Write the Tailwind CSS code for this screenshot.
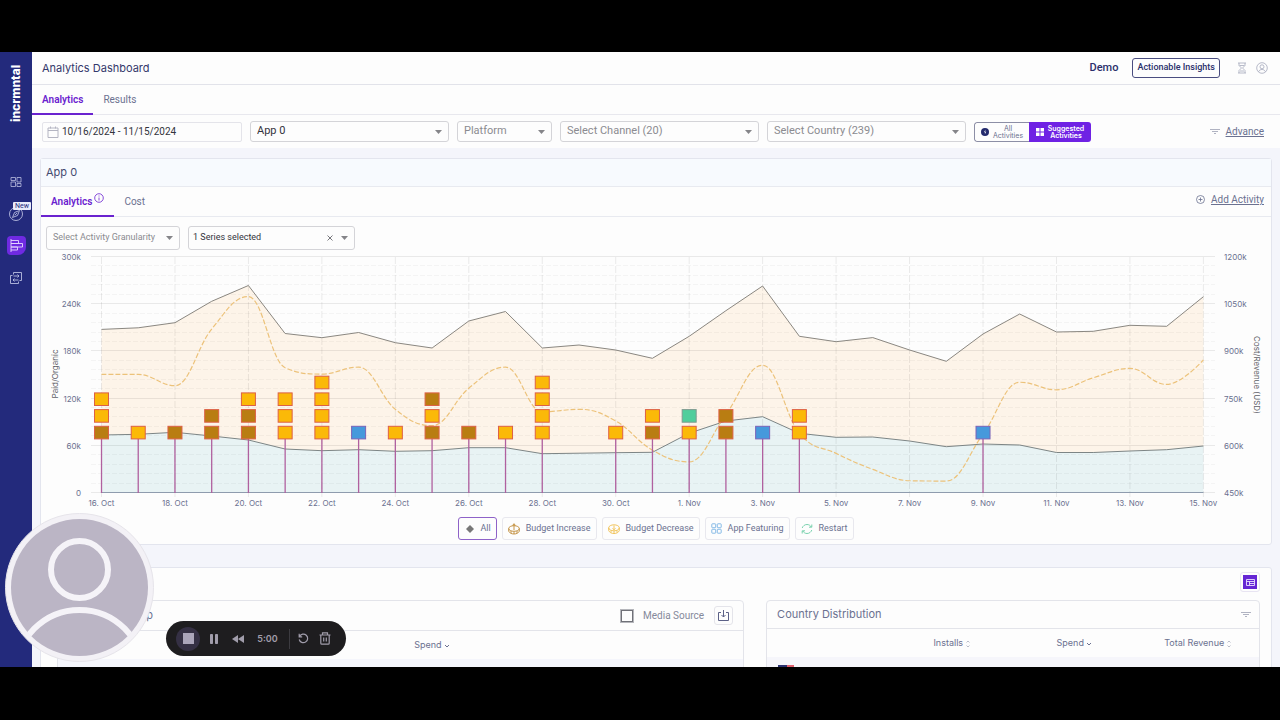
<!DOCTYPE html>
<html lang="en">
<head>
  <meta charset="UTF-8" />
  <meta name="viewport" content="width=device-width, initial-scale=1.0" />
  <title>Analytics Dashboard</title>
  <script src="https://cdn.jsdelivr.net/npm/@tailwindcss/browser@4"></script>
</head>
<body class="bg-black font-['Roboto',sans-serif] text-[11px] text-[#6b7190]">

  <div class="h-screen pt-[52px] pb-[53px]">
    <div class="relative flex h-full overflow-hidden bg-[#f4f5fb]">

      <!-- Sidebar -->
      <nav class="flex w-8 shrink-0 flex-col items-center bg-[#232a7c] pt-2.5 text-[#b9bde0]">
        <a href="#" class="h-[60px] rotate-180 font-['Inter',sans-serif] text-xs leading-8 font-extrabold text-white [writing-mode:vertical-rl]">incrmntal</a>
        <a href="#" aria-label="Dashboard" class="mt-[54px]">
          <svg class="size-3" viewBox="0 0 12 12" fill="none" stroke="currentColor" stroke-width=".8"><path d="M1 1.500h4.500v3H1zM7 1.500h4v4.500H7zM1 6h4.500v4.500H1zM7 7.500h4v3H7z"/></svg>
        </a>
        <a href="#" aria-label="Discover" class="relative mt-[18px]">
          <svg class="size-4" viewBox="0 0 16 16" fill="none" stroke="currentColor" stroke-width=".9"><circle cx="8" cy="8" r="6.500"/><path d="M11.500 4.500 9.500 9.500 4.500 11.500 6.500 6.500zM6.800 9.200l2.400-2.400"/></svg>
          <span class="absolute -top-1 left-[5px] rounded-[1px] bg-[#e9ebfa] px-0.5 text-[7px] leading-[8px] text-[#232a7c]">New</span>
        </a>
        <a href="#" aria-label="Analytics" class="mt-3.5 flex size-[19px] items-center justify-center rounded-sm rounded-br-lg bg-[#6f2ae2] text-[#e4d6ff]">
          <svg class="size-[13px]" viewBox="0 0 13 13" fill="none" stroke="currentColor" stroke-width=".9"><path d="M1 0v13M1 1.500h7.500v3H1M1 4.500h11.500v3.500H1M1 8h6.500v3H1"/></svg>
        </a>
        <a href="#" aria-label="Transfer" class="mt-4">
          <svg class="size-3.5" viewBox="0 0 14 14" fill="none" stroke="currentColor" stroke-width=".9"><path d="M4.500 3.500v-2h8v8h-2M9.500 10.500v2h-8v-8h2M4.500 5h5.500M8.500 3.500 10 5 8.500 6.500M9.500 9H4M5.500 7.500 4 9l1.500 1.500"/></svg>
        </a>
      </nav>

      <main class="min-w-0 flex-1">
        <header class="flex h-[33px] items-center border-b border-[#e2e3ea] bg-[#fdfdfd] pr-3 pl-2.5">
          <h1 class="flex-1 font-['Inter',sans-serif] text-[11px] text-[#34386b]">Analytics Dashboard</h1>
          <span class="mr-3.5 font-medium text-[#2b2f6b]">Demo</span>
          <button class="mr-4 h-5 rounded-[3px] border border-[#4a4d80] px-1 text-[9px] font-medium text-[#2b2f6b]">Actionable Insights</button>
          <button aria-label="Pending" class="mr-2 text-[#a4a8bb]">
            <svg class="size-3" viewBox="0 0 12 12" fill="none" stroke="currentColor" stroke-width=".8"><path d="M2 1h8M2 11h8M3 1v2.500L5.500 6 3 8.500V11M9 1v2.500L6.500 6 9 8.500V11M3.500 3.500h5M4 9h4"/></svg>
          </button>
          <button aria-label="Account" class="text-[#a4a8bb]">
            <svg class="size-3" viewBox="0 0 12 12" fill="none" stroke="currentColor" stroke-width=".8"><circle cx="6" cy="6" r="5.300"/><circle cx="6" cy="4.800" r="2"/><path d="M2.500 9.800C3.200 8.200 4.500 7.500 6 7.500s2.800.7 3.500 2.300"/></svg>
          </button>
        </header>

        <div class="flex h-[30px] border-b border-[#e8e8ee] bg-[#fdfdfd] text-[10px]">
          <button class="-mb-px border-b-2 border-[#6a22cf] px-2.5 font-semibold text-[#6a22cf]">Analytics</button>
          <button class="px-2.5">Results</button>
        </div>

        <div class="flex h-[33px] items-center gap-2 bg-[#fdfdfd] pr-2 pl-2.5">
          <div class="relative w-50">
            <svg class="absolute top-1 left-[5px] size-3" viewBox="0 0 12 12" fill="none" stroke="#b4b5c2"><path d="M1 2h10v9.500H1zM1 4.500h10M3.500.5v2M8.500.5v2"/></svg>
            <input type="text" aria-label="Date range" value="10/16/2024 - 11/15/2024" class="h-5 w-full rounded-[2px] border border-[#e4e4ea] pl-[19px] text-[10px] text-[#33343c]" />
          </div>
          <div class="relative w-[199px]">
            <select aria-label="App" class="h-[21px] w-full appearance-none rounded-[3px] border border-[#d4d4d8] px-1.5 text-[11px] text-[#33343c]"><option>App 0</option></select>
            <svg class="absolute top-[9px] right-[7px] h-1 w-[7px]" viewBox="0 0 7 4" fill="#858589"><path d="M0 0h7L3.500 4z"/></svg>
          </div>
          <div class="relative w-[95px]">
            <select aria-label="Platform" class="h-[21px] w-full appearance-none rounded-[3px] border border-[#d4d4d8] px-1.5 text-[11px] text-[#8b8b90]"><option>Platform</option></select>
            <svg class="absolute top-[9px] right-[7px] h-1 w-[7px]" viewBox="0 0 7 4" fill="#858589"><path d="M0 0h7L3.500 4z"/></svg>
          </div>
          <div class="relative w-[199px]">
            <select aria-label="Channel" class="h-[21px] w-full appearance-none rounded-[3px] border border-[#d4d4d8] px-1.5 text-[11px] text-[#8b8b90]"><option>Select Channel (20)</option></select>
            <svg class="absolute top-[9px] right-[7px] h-1 w-[7px]" viewBox="0 0 7 4" fill="#858589"><path d="M0 0h7L3.500 4z"/></svg>
          </div>
          <div class="relative w-[199px]">
            <select aria-label="Country" class="h-[21px] w-full appearance-none rounded-[3px] border border-[#d4d4d8] px-1.5 text-[11px] text-[#8b8b90]"><option>Select Country (239)</option></select>
            <svg class="absolute top-[9px] right-[7px] h-1 w-[7px]" viewBox="0 0 7 4" fill="#858589"><path d="M0 0h7L3.500 4z"/></svg>
          </div>
          <div class="flex h-5 overflow-hidden rounded-[3px] font-['Inter',sans-serif] text-[7px] leading-[7px]">
            <button class="flex w-[55px] items-center justify-center gap-1 rounded-l-[3px] border border-r-0 border-[#8d8fa6]">
              <svg class="size-2" viewBox="0 0 8 8"><circle cx="4" cy="4" r="4" fill="#232a6c"/><path d="M4.500 1.500 3 4.300h1.200L3.700 6.500 5.300 3.700H4.100z" fill="#fff"/></svg>
              <span>All<br>Activities</span>
            </button>
            <button class="flex w-[62px] items-center justify-center gap-1 bg-[#6f22e4] font-semibold text-white">
              <svg class="size-2" viewBox="0 0 8 8" fill="#fff"><path d="M0 0h3.500v3.500H0zM4.500 0H8v3.500H4.500zM0 4.500h3.500V8H0zM4.500 4.500H8V8H4.500z"/></svg>
              <span>Suggested<br>Activities</span>
            </button>
          </div>
          <a href="#" class="ml-auto flex items-center gap-1.5 pr-2 text-[10px]">
            <svg class="h-1.5 w-2.5" viewBox="0 0 10 6" stroke="#b0b3c2"><path d="M0 .5h10M2 2.500h6M4 4.500h2"/></svg>
            <span class="underline">Advance</span>
          </a>
        </div>

        <div class="space-y-[22px] px-2 pt-2.5">
          <!-- Chart panel -->
          <section class="rounded-[3px] border border-[#e3e5ee] bg-[#fdfdfd]">
            <h2 class="h-7 border-b border-[#e8eaf0] bg-[#f7fafe] px-[5px] font-['Inter',sans-serif] text-[11px] leading-[27px] text-[#454a70]">App 0</h2>
            <div class="flex h-[30px] items-stretch border-b border-[#e8eaf0] text-[10px]">
              <button class="-mb-px flex items-center gap-0.5 border-b-2 border-[#6a22cf] px-2.5 font-semibold text-[#6a22cf]">
                Analytics
                <svg class="mb-1.5 size-2.5" viewBox="0 0 10 10" fill="none" stroke="currentColor" stroke-width=".8"><circle cx="5" cy="5" r="4.300"/><path d="M5 4.500v3M5 2.500v1"/></svg>
              </button>
              <button class="px-2.5">Cost</button>
              <a href="#" class="ml-auto flex items-center gap-1.5 pr-[7px] pb-1">
                <svg class="size-[9px]" viewBox="0 0 9 9" fill="none" stroke="currentColor" stroke-width=".8"><circle cx="4.500" cy="4.500" r="4"/><path d="M4.500 2.500v4M2.500 4.500h4"/></svg>
                <span class="underline">Add Activity</span>
              </a>
            </div>
            <div class="flex gap-2 px-[5px] pt-[9px]">
              <div class="relative w-[134px]">
                <select aria-label="Activity granularity" class="h-6 w-full appearance-none rounded-[3px] border border-[#d4d4d8] px-1.5 text-[9px] text-[#8b8b90]"><option>Select Activity Granularity</option></select>
                <svg class="absolute top-[10px] right-[7px] h-1 w-[7px]" viewBox="0 0 7 4" fill="#858589"><path d="M0 0h7L3.500 4z"/></svg>
              </div>
              <div class="relative w-[167px]">
                <select aria-label="Series" class="h-6 w-full appearance-none rounded-[3px] border border-[#d4d4d8] px-1 text-[9px] text-[#33343c]"><option>1 Series selected</option></select>
                <button aria-label="Clear series" class="absolute top-[9px] right-[22px]">
                  <svg class="size-1.5" viewBox="0 0 6 6" stroke="#77777c"><path d="M.5.5l5 5M5.500.5l-5 5"/></svg>
                </button>
                <svg class="absolute top-[10px] right-[7px] h-1 w-[7px]" viewBox="0 0 7 4" fill="#858589"><path d="M0 0h7L3.500 4z"/></svg>
              </div>
            </div>

            <svg id="chart" class="w-full font-['Inter',sans-serif]" viewBox="41 250 1230 264" role="img" aria-label="Paid and organic installs with cost"></svg>

            <div class="flex justify-center gap-[5px] pt-[3px] pb-1 text-[9px]">
              <button class="flex h-[23px] items-center gap-1.5 rounded-[3px] border border-[#8e62c8] pr-[5px] pl-[7px]">
                <svg class="size-2" viewBox="0 0 8 8" fill="#777"><path d="M4 0 8 4 4 8 0 4z"/></svg>All
              </button>
              <button class="flex h-[23px] items-center gap-1.5 rounded-[3px] border border-[#e8e8ee] px-[5px]">
                <svg class="size-3" viewBox="0 0 12 12" fill="none" stroke="#c08a35" stroke-width=".9"><ellipse cx="6" cy="5.500" rx="5.300" ry="2.800"/><path d="M.7 5.500v2.700C1.500 10 3.500 11 6 11s4.500-1 5.300-2.800V5.500M6 7V.8M4.500 2.200 6 .8l1.500 1.400M3 8v2M6 8.500V11M9 8v2"/></svg>Budget Increase
              </button>
              <button class="flex h-[23px] items-center gap-1.5 rounded-[3px] border border-[#e8e8ee] px-[5px]">
                <svg class="size-3" viewBox="0 0 12 12" fill="none" stroke="#f0c04e" stroke-width=".9"><ellipse cx="6" cy="4.800" rx="5.300" ry="3"/><path d="M.7 4.800v2.700C1.500 9.500 3.500 10.500 6 10.500s4.500-1 5.300-3V4.800M6 2.500v4.300M4.500 5.300 6 6.800l1.500-1.500M3 7.500v2M6 8v2.500M9 7.500v2"/></svg>Budget Decrease
              </button>
              <button class="flex h-[23px] items-center gap-1.5 rounded-[3px] border border-[#e8e8ee] px-[5px]">
                <svg class="size-[11px]" viewBox="0 0 11 11" fill="none" stroke="#7ab4e4" stroke-width=".9"><rect x=".8" y=".8" width="3.900" height="3.900" rx=".6"/><rect x="6.300" y=".8" width="3.900" height="3.900" rx=".6"/><rect x=".8" y="6.300" width="3.900" height="3.900" rx=".6"/><rect x="6.300" y="6.300" width="3.900" height="3.900" rx=".6"/></svg>App Featuring
              </button>
              <button class="flex h-[23px] items-center gap-1.5 rounded-[3px] border border-[#e8e8ee] px-[5px]">
                <svg class="size-3" viewBox="0 0 12 12" fill="none" stroke="#6ccda6" stroke-width=".9"><path d="M1.200 5C2 2.800 3.800 1.500 6 1.500c1.800 0 3.300.9 4.200 2.500M10.800 1.500V4.200H8M10.800 7C10 9.200 8.200 10.500 6 10.500c-1.800 0-3.300-.9-4.200-2.500M1.200 10.500V7.800H4"/></svg>Restart
              </button>
            </div>
          </section>

          <!-- Breakdown tables -->
          <section class="rounded-[3px] border border-[#e3e5ee] bg-[#fdfdfd] pr-[11px] pb-4 pl-4">
            <div class="flex h-8 items-center justify-end pb-1">
              <button aria-label="Table layout" class="flex size-5 items-center justify-center rounded-[3px] border border-[#e8e4f2]">
                <span class="flex size-3.5 items-center justify-center bg-[#6525d4]">
                  <svg class="h-[7px] w-[9px]" viewBox="0 0 9 7" fill="none" stroke="#e9dcff" stroke-width=".9"><path d="M.5.5h8v6h-8zM.5 2.500h8M3.500 2.500v4M3.500 4.500h5"/></svg>
                </span>
              </button>
            </div>
            <div class="flex items-start gap-[22px]">
              <div class="flex-[688] rounded-[4px] border border-[#e3e4ea]">
                <div class="flex h-[30px] items-center border-b border-[#e3e4ea] pr-2.5 pl-[74px]">
                  <h3 class="flex-1 font-['Inter',sans-serif] text-[11px]">App</h3>
                  <label class="flex items-center gap-2.5 text-[10px] text-[#85899b]">
                    <input type="checkbox" class="size-3 appearance-none border border-[#707178] outline outline-[#b5b6bb]" />Media Source
                  </label>
                  <button aria-label="Download" class="ml-2.5 flex size-[19px] items-center justify-center rounded-[3px] border border-[#e4e4ea]">
                    <svg class="size-[11px]" viewBox="0 0 11 11" fill="none" stroke="#5c6187"><path d="M3 2.500H.5v8h10v-8H8M5.500 0v7M3.500 5l2 2 2-2"/></svg>
                  </button>
                </div>
                <table class="w-full text-left font-['Inter',sans-serif] text-[9px]">
                  <thead>
                    <tr class="h-7"><th class="w-[52%]"></th><th class="font-normal">Spend <svg class="inline h-1 w-1.5" viewBox="0 0 6 4" fill="none" stroke="currentColor"><path d="M1 1l2 2 2-2"/></svg></th></tr>
                  </thead>
                  <tbody><tr class="h-7 bg-[#f5f6fc]"><td></td><td></td></tr></tbody>
                </table>
              </div>
              <div class="flex-[494] rounded-[4px] border border-[#e3e4ea]">
                <div class="flex h-7 items-center justify-between border-b border-[#e3e4ea] pr-2 pl-2.5">
                  <h3 class="font-['Inter',sans-serif] text-[11px]">Country Distribution</h3>
                  <button aria-label="Filter countries"><svg class="h-1.5 w-2.5" viewBox="0 0 10 6" stroke="#b0b3c2"><path d="M0 .5h10M2 2.500h6M4 4.500h2"/></svg></button>
                </div>
                <table class="w-full table-fixed text-center font-['Inter',sans-serif] text-[9px]">
                  <thead>
                    <tr class="h-7">
                      <th class="w-[25%]"></th>
                      <th class="font-normal">Installs <svg class="inline h-2 w-1" viewBox="0 0 4 8" fill="none" stroke="#a9adbd" stroke-width=".8"><path d="M.5 2.500 2 1l1.500 1.500M.5 5.500 2 7l1.500-1.500"/></svg></th>
                      <th class="font-normal">Spend <svg class="inline h-1 w-1.5" viewBox="0 0 6 4" fill="none" stroke="currentColor"><path d="M1 1l2 2 2-2"/></svg></th>
                      <th class="font-normal">Total Revenue <svg class="inline h-2 w-1" viewBox="0 0 4 8" fill="none" stroke="#a9adbd" stroke-width=".8"><path d="M.5 2.500 2 1l1.500 1.500M.5 5.500 2 7l1.500-1.500"/></svg></th>
                    </tr>
                  </thead>
                  <tbody>
                    <tr class="h-7 bg-[#f6f6fb] align-top">
                      <td class="pt-2 pl-[11px]"><svg class="h-[11px] w-4" viewBox="0 0 16 11"><path fill="#e0606e" d="M0 0h16v11H0z"/><path stroke="#fff" d="M0 2.500h16M0 5.500h16M0 8.500h16"/><path fill="#2b3270" d="M0 0h9v6H0z"/></svg></td>
                      <td></td><td></td><td></td>
                    </tr>
                  </tbody>
                </table>
              </div>
            </div>
          </section>
        </div>
      </main>

      <!-- Presenter bubble -->
      <svg class="absolute bottom-[5px] left-[5px] size-[149px]" viewBox="0 0 149 149" fill="none">
        <defs><clipPath id="bubble"><circle cx="74.500" cy="74.500" r="69"/></clipPath></defs>
        <circle cx="74.500" cy="74.500" r="74" fill="#f3f1f6" stroke="#e6e4ea"/>
        <circle cx="74.500" cy="74.500" r="68.500" fill="#bbb5c5"/>
        <g clip-path="url(#bubble)" stroke="#f5f3f8" stroke-width="6">
          <circle cx="74.500" cy="56.500" r="28.500"/>
          <circle cx="74.500" cy="161" r="64"/>
        </g>
      </svg>

      <!-- Recorder controls -->
      <div class="absolute bottom-[11px] left-[166px] flex h-[35px] w-[180px] items-center rounded-full bg-[#1e1d1f] pl-2.5 text-[#a19dab]">
        <button aria-label="Stop" class="flex size-6 items-center justify-center rounded-full bg-[#353044]"><span class="size-[11px] bg-[#aba5ba]"></span></button>
        <button aria-label="Pause" class="ml-2.5"><svg class="h-2.5 w-2" viewBox="0 0 8 10" fill="currentColor"><rect width="3" height="10" rx=".8"/><rect x="5" width="3" height="10" rx=".8"/></svg></button>
        <button aria-label="Rewind" class="ml-3.5"><svg class="h-2 w-3" viewBox="0 0 12 8" fill="currentColor"><path d="M6 0v8L0 4zM12 0v8L6 4z"/></svg></button>
        <span class="ml-3 w-[23px] text-center font-['Inter',sans-serif] text-[9px] font-semibold">5:00</span>
        <span class="ml-2.5 h-5 w-px bg-[#3c3b40]"></span>
        <button aria-label="Restart" class="ml-2"><svg class="size-[11px]" viewBox="0 0 11 11" fill="none" stroke="currentColor" stroke-width="1.200"><path d="M1.500 3.500A4.300 4.300 0 1 1 1.200 6.500M1.200.8v3h3"/></svg></button>
        <button aria-label="Delete" class="ml-2.5"><svg class="h-[13px] w-3" viewBox="0 0 12 13" fill="none" stroke="currentColor" stroke-width="1.200"><path d="M.5 3h11M3.500 3V.8h5V3M1.800 3v8.200c0 .6.400 1 1 1h6.400c.6 0 1-.4 1-1V3M4.700 5.500v4M7.300 5.500v4"/></svg></button>
      </div>
    </div>
  </div>

  <script>
    const paid = [208, 210, 216.5, 243.7, 263.8, 202.8, 197.4, 204, 191, 184.3, 218.6, 230.7, 184.3, 188.1, 181.8, 171.2, 199.2, 231.7, 263.1, 199.2, 192.3, 197.6, 181.8, 167.4, 202.1, 227.5, 204.7, 205.5, 213.2, 211.9, 249.5];
    const organic = [73.7, 74.6, 77.2, 72.5, 67.4, 55.9, 53.8, 55, 53, 53.8, 57.6, 57.6, 50, 50.6, 51.2, 51.7, 76, 91.5, 97, 75.9, 70.8, 71.2, 66.1, 58.9, 62.3, 61, 51.5, 51.5, 53.4, 55, 59.7];
    const cost = [827, 827, 791, 971, 1074, 848, 828, 850, 716, 664, 783, 850, 708, 716, 679, 586, 549, 700, 856, 640, 576, 525, 489, 488, 637, 802, 778, 816, 846, 795, 873];
    // Activities per day, listed from the bottom of the stack up
    const activities = {
      0: "idd", 1: "d", 2: "i", 3: "ii", 4: "iid", 5: "ddd", 6: "dddd", 7: "f", 8: "d", 9: "idi", 10: "i",
      11: "d", 12: "dddd", 14: "d", 15: "id", 16: "dr", 17: "ii", 18: "f", 19: "dd", 24: "f"
    };
    const colors = { i: "#b97d12", d: "#fbb908", f: "#4699dc", r: "#4fce9c" };
    const labels = ["16. Oct", "18. Oct", "20. Oct", "22. Oct", "24. Oct", "26. Oct", "28. Oct", "30. Oct", "1. Nov", "3. Nov", "5. Nov", "7. Nov", "9. Nov", "11. Nov", "13. Nov", "15. Nov"];

    const base = 493, height = 236;
    const x = i => 101.5 + i * 36.73;
    const y = v => base - v * height / 300;
    const yCost = v => base - (v - 450) * height / 750;
    const line = points => points.map(p => p[0].toFixed(1) + " " + p[1].toFixed(1)).join(" L");

    function spline(p) {
      let d = "M" + p[0].join(" ");
      let prevRight = p[0];
      for (let i = 1; i < p.length; i++) {
        let left = p[i], right = p[i];
        if (i < p.length - 1) {
          const [px, py] = p[i], [lx, ly] = p[i - 1], [nx, ny] = p[i + 1];
          const leftX = (1.5 * px + lx) / 2.5, rightX = (1.5 * px + nx) / 2.5;
          let leftY = (1.5 * py + ly) / 2.5, rightY = (1.5 * py + ny) / 2.5;
          const fix = (rightY - leftY) * (rightX - px) / (rightX - leftX) + py - rightY;
          leftY += fix;
          rightY += fix;
          if (leftY > ly && leftY > py) { leftY = Math.max(ly, py); rightY = 2 * py - leftY; }
          else if (leftY < ly && leftY < py) { leftY = Math.min(ly, py); rightY = 2 * py - leftY; }
          if (rightY > ny && rightY > py) { rightY = Math.max(ny, py); leftY = 2 * py - rightY; }
          else if (rightY < ny && rightY < py) { rightY = Math.min(ny, py); leftY = 2 * py - rightY; }
          left = [leftX, leftY];
          right = [rightX, rightY];
        }
        d += ` C${prevRight.join(" ")} ${left.join(" ")} ${p[i].join(" ")}`;
        prevRight = right;
      }
      return d;
    }

    const paidPts = paid.map((v, i) => [x(i), y(v)]);
    const organicPts = organic.map((v, i) => [x(i), y(v)]);
    const costPts = cost.map((v, i) => [x(i), yCost(v)]);
    let out = "";

    out += `<path fill="#fdf4e9" d="M${line(paidPts)} L${line([...organicPts].reverse())}Z"/>`;
    out += `<path fill="#e8f3f4" d="M${line(organicPts)} L${x(30)} ${base} L${x(0)} ${base}Z"/>`;

    for (let k = 0; k <= 25; k++) {
      const gy = Math.round(base - k * height / 25) - 0.5;
      out += k % 5
        ? `<path stroke="#000" stroke-opacity=".035" stroke-dasharray="5 2" d="M91 ${gy}H1215"/>`
        : `<path stroke="#000" stroke-opacity=".08" d="M91 ${gy}H1215"/>`;
    }
    labels.forEach((text, n) => {
      const gx = x(n * 2);
      out += `<path stroke="#000" stroke-opacity=".08" stroke-dasharray="7 2" d="M${gx} 257V497"/>`;
      out += `<text x="${gx}" y="506" text-anchor="middle">${text}</text>`;
    });
    for (let k = 0; k <= 5; k++) {
      const ty = base - k * height / 5 + 3;
      out += `<text x="81" y="${ty}" text-anchor="end">${k ? k * 60 + "k" : 0}</text>`;
      out += `<text x="1224" y="${ty}">${450 + k * 150}k</text>`;
    }
    out += `<text transform="translate(58 374) rotate(-90)" text-anchor="middle" fill="#5d5f68">Paid/Organic</text>`;
    out += `<text transform="translate(1254 375) rotate(90)" text-anchor="middle" fill="#5d5f68">Cost/Revenue (USD)</text>`;

    out += `<path fill="none" stroke="#8a8781" d="M${line(paidPts)}"/>`;
    out += `<path fill="none" stroke="#7d8585" d="M${line(organicPts)}"/>`;
    out += `<path fill="none" stroke="#ecc27a" stroke-width="1.2" stroke-dasharray="5 2" d="${spline(costPts)}"/>`;
    out += `<path stroke="#8f9cae" d="M${x(0)} 492.500H${x(30)}"/>`;

    for (const [day, stack] of Object.entries(activities)) {
      const cx = x(Number(day));
      out += `<path stroke="#b0609f" stroke-width="1.300" d="M${cx} 439V493"/>`;
      [...stack].forEach((type, n) => {
        const stroke = type === "f" ? "#7a63b8" : type === "r" ? "#7f9a90" : "#dd6046";
        out += `<rect x="${cx - 7}" y="${426.300 - n * 16.700}" width="14" height="12.600" fill="${colors[type]}" stroke="${stroke}"/>`;
      });
    }
    const chart = document.getElementById("chart");
    chart.setAttribute("font-size", "8");
    chart.setAttribute("fill", "#6b7190");
    chart.innerHTML = out;
  </script>
</body>
</html>
